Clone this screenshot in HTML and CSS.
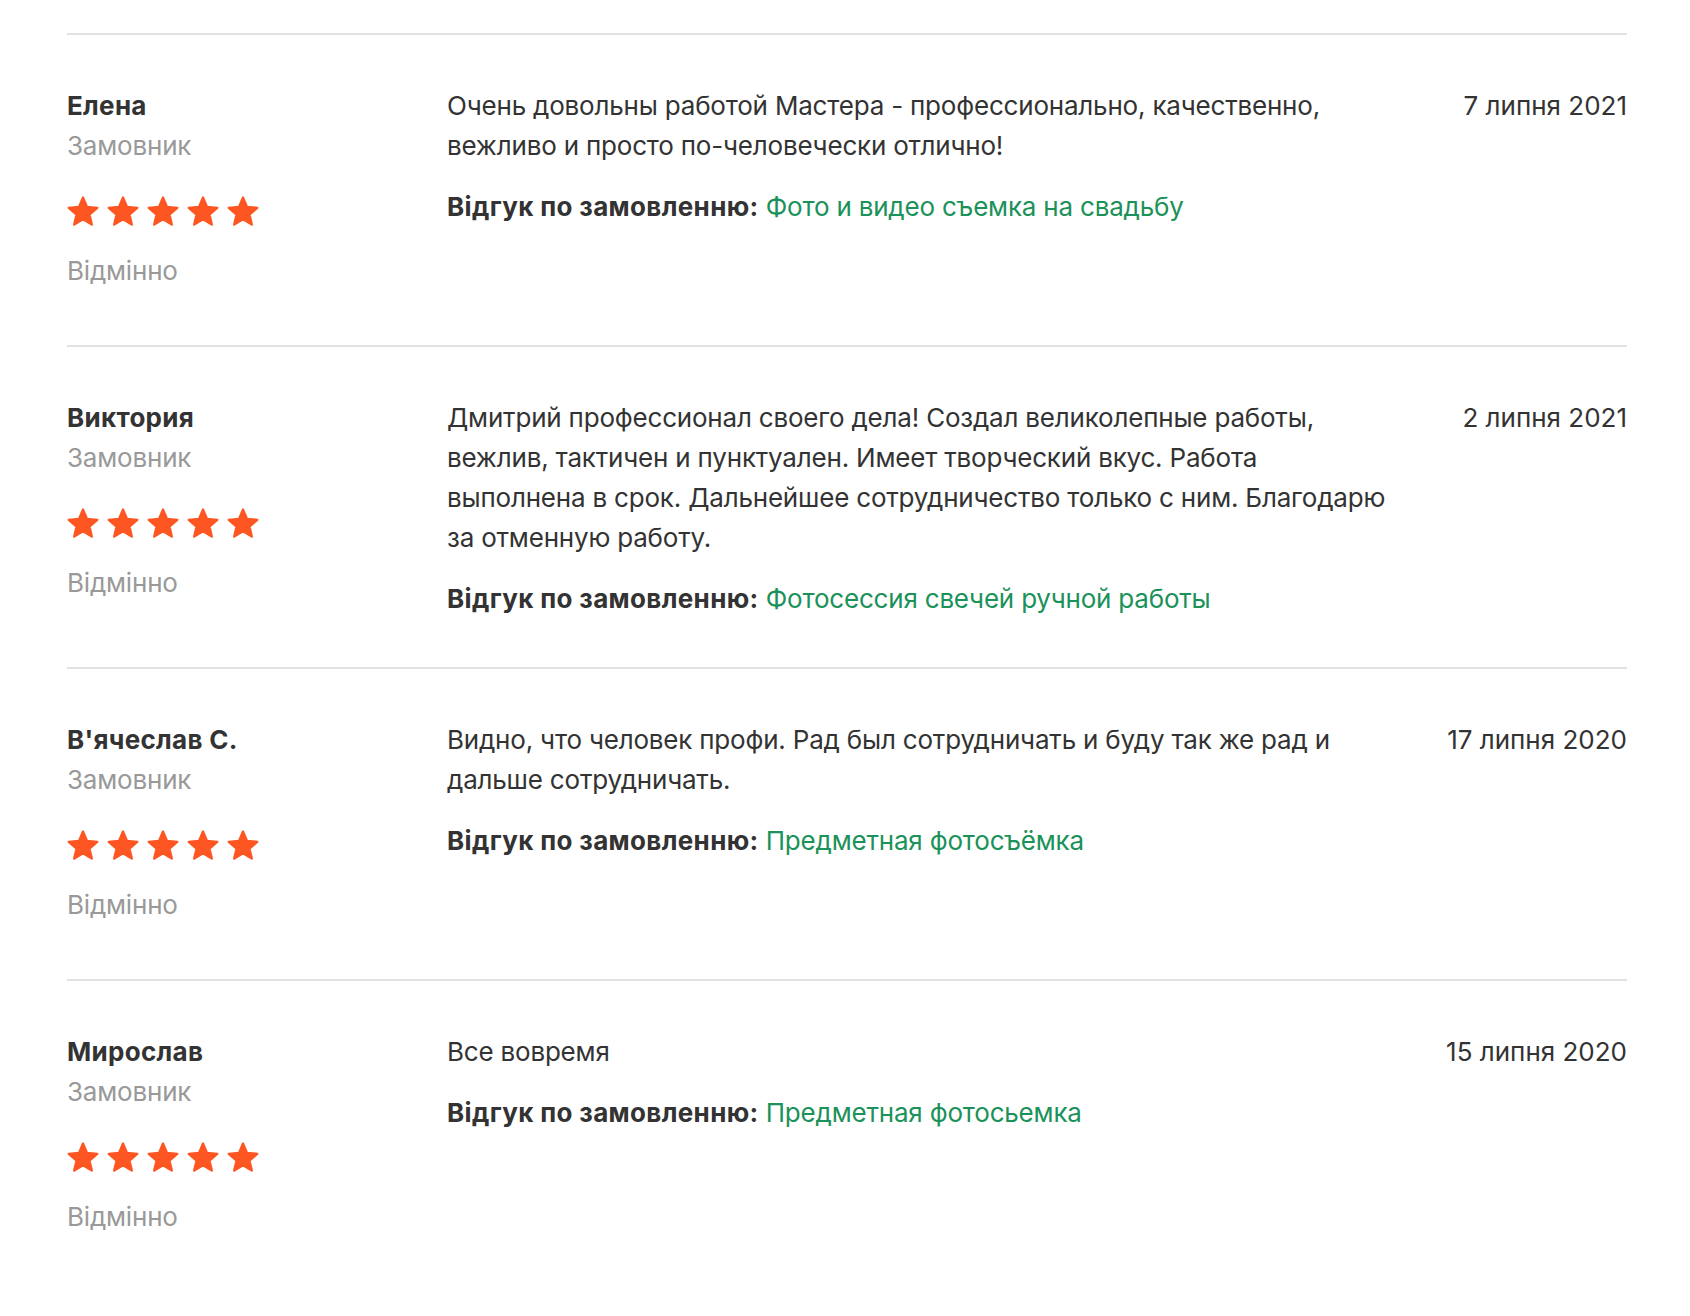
FILE: index.html
```html
<!DOCTYPE html>
<html lang="uk">
<head>
<meta charset="utf-8">
<title>Відгуки</title>
<link rel="stylesheet" href="styles.css">
</head>
<body>
<svg class="defs" width="0" height="0" aria-hidden="true">
  <symbol id="star" viewBox="1 1 22 21">
    <path d="M12 17.27L18.18 21l-1.64-7.03L22 9.24l-7.19-.61L12 2 9.19 8.63 2 9.24l5.46 4.73L5.82 21z" fill="#fe5622" stroke="#fe5622" stroke-width="1.6" stroke-linejoin="round"/>
  </symbol>
</svg>
<div class="reviews">
  <div class="review">
    <div class="author">
      <div class="name">Елена</div>
      <div class="role">Замовник</div>
      <div class="stars"><svg class="star"><use href="#star"/></svg><svg class="star"><use href="#star"/></svg><svg class="star"><use href="#star"/></svg><svg class="star"><use href="#star"/></svg><svg class="star"><use href="#star"/></svg></div>
      <div class="rating">Відмінно</div>
    </div>
    <div class="body">
      <p class="text">Очень довольны работой Мастера - профессионально, качественно, вежливо и просто по-человечески отлично!</p>
      <p class="order"><b>Відгук по замовленню:</b> <a href="#">Фото и видео съемка на свадьбу</a></p>
    </div>
    <div class="date">7 липня 2021</div>
  </div>
  <div class="review">
    <div class="author">
      <div class="name">Виктория</div>
      <div class="role">Замовник</div>
      <div class="stars"><svg class="star"><use href="#star"/></svg><svg class="star"><use href="#star"/></svg><svg class="star"><use href="#star"/></svg><svg class="star"><use href="#star"/></svg><svg class="star"><use href="#star"/></svg></div>
      <div class="rating">Відмінно</div>
    </div>
    <div class="body">
      <p class="text">Дмитрий профессионал своего дела! Создал великолепные работы, вежлив, тактичен и пунктуален. Имеет творческий вкус. Работа выполнена в срок. Дальнейшее сотрудничество только с ним. Благодарю за отменную работу.</p>
      <p class="order"><b>Відгук по замовленню:</b> <a href="#">Фотосессия свечей ручной работы</a></p>
    </div>
    <div class="date">2 липня 2021</div>
  </div>
  <div class="review">
    <div class="author">
      <div class="name">В'ячеслав С.</div>
      <div class="role">Замовник</div>
      <div class="stars"><svg class="star"><use href="#star"/></svg><svg class="star"><use href="#star"/></svg><svg class="star"><use href="#star"/></svg><svg class="star"><use href="#star"/></svg><svg class="star"><use href="#star"/></svg></div>
      <div class="rating">Відмінно</div>
    </div>
    <div class="body">
      <p class="text">Видно, что человек профи. Рад был сотрудничать и буду так же рад и дальше сотрудничать.</p>
      <p class="order"><b>Відгук по замовленню:</b> <a href="#">Предметная фотосъёмка</a></p>
    </div>
    <div class="date">17 липня 2020</div>
  </div>
  <div class="review">
    <div class="author">
      <div class="name">Мирослав</div>
      <div class="role">Замовник</div>
      <div class="stars"><svg class="star"><use href="#star"/></svg><svg class="star"><use href="#star"/></svg><svg class="star"><use href="#star"/></svg><svg class="star"><use href="#star"/></svg><svg class="star"><use href="#star"/></svg></div>
      <div class="rating">Відмінно</div>
    </div>
    <div class="body">
      <p class="text">Все вовремя</p>
      <p class="order"><b>Відгук по замовленню:</b> <a href="#">Предметная фотосьемка</a></p>
    </div>
    <div class="date">15 липня 2020</div>
  </div>
</div>
</body>
</html>
```

FILE: styles.css
```css
html, body {
  margin: 0;
  padding: 0;
  background: #fff;
}

body {
  font-family: Inter, "Noto Sans", "Liberation Sans", sans-serif;
  font-size: 26px;
  line-height: 40px;
  letter-spacing: -0.2px;
  color: #333333;
}

.defs {
  position: absolute;
  width: 0;
  height: 0;
  overflow: hidden;
}

.reviews {
  margin: 33px 0 0 67px;
  width: 1560px;
}

.review {
  display: grid;
  grid-template-columns: 380px 950px 1fr;
  border-top: 2px solid #e2e2e5;
  padding: 51px 0 48px;
}

.author {
  display: flex;
  flex-direction: column;
  align-items: flex-start;
}

.name {
  font-weight: 700;
  letter-spacing: 0.3px;
  color: #333333;
}

.role {
  color: #999999;
}

.stars {
  display: flex;
  gap: 8px;
  margin-top: 30px;
  height: 30px;
}

.star {
  width: 32px;
  height: 30px;
  display: block;
}

.rating {
  color: #999999;
  margin-top: 25px;
  margin-bottom: 6px;
}

.body p {
  margin: 0;
}

.text {
  color: #333333;
}

.order {
  margin-top: 21px !important;
}

.order b {
  font-weight: 700;
  letter-spacing: 0.35px;
}

.order a {
  color: #1b9259;
  text-decoration: none;
}

.date {
  text-align: right;
  white-space: nowrap;
  letter-spacing: 0;
  color: #333333;
}
```
